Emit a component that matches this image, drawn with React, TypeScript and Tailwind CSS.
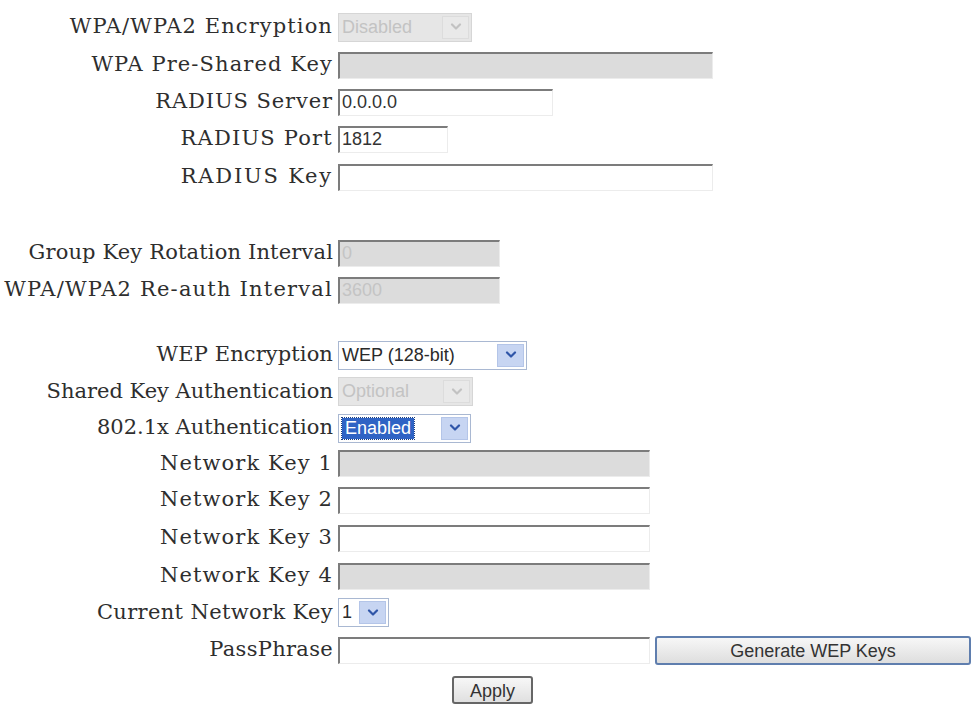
import React from "react"

function Chevron({ color }: { color: string }) {
  return (
    <svg width="12" height="8" viewBox="0 0 12 8" fill="none">
      <path d="M2 1.5 L6 5.5 L10 1.5" stroke={color} strokeWidth="2.2" strokeLinecap="round" strokeLinejoin="round" />
    </svg>
  )
}

function TextBox({ w, value = "", disabled = false }: { w: string; value?: string; disabled?: boolean }) {
  return (
    <input
      readOnly
      value={value}
      className={`${w} h-[27px] border-t-2 border-l-2 border-b border-r border-t-[#7c7c7c] border-l-[#7c7c7c] border-b-[#ececec] border-r-[#ececec] px-[2px] text-[18px] font-['Liberation_Sans',Arial,sans-serif] outline-none ${
        disabled ? "bg-[#dcdcdc] text-[#c4c4c4]" : "bg-white text-[#333]"
      }`}
    />
  )
}

function Select({
  w,
  value,
  variant = "normal",
}: {
  w: string
  value: string
  variant?: "normal" | "disabled" | "focused"
}) {
  const disabled = variant === "disabled"
  return (
    <div
      className={`${w} h-[29px] flex items-stretch border font-['Liberation_Sans',Arial,sans-serif] text-[18px] ${
        disabled ? "border-[#d6d6d6] bg-[#e6e6e6]" : "border-[#a9b8d2] bg-white"
      }`}
    >
      <div className="flex-1 flex items-center pl-[3px] pr-[2px] min-w-0 whitespace-nowrap">
        {variant === "focused" ? (
          <span className="bg-[#2f63c4] text-white px-[3px] leading-[21px] outline outline-1 outline-dotted outline-[#1c3f80]">{value}</span>
        ) : (
          <span className={disabled ? "text-[#c3c3c3]" : "text-[#2a2a2a]"}>{value}</span>
        )}
      </div>
      <div
        className={`w-[27px] m-[2px] ml-[4px] flex items-center justify-center ${
          disabled ? "bg-[#e9e9e9] border border-[#dcdcdc]" : "bg-[#c7d5f2] border border-[#b4c5e8]"
        }`}
      >
        <Chevron color={disabled ? "#c2c2c2" : "#2f55a8"} />
      </div>
    </div>
  )
}

function Row({
  label,
  h,
  track = "tracking-normal",
  children,
}: {
  label?: string
  h: string
  track?: string
  children?: React.ReactNode
}) {
  return (
    <div className={`flex items-center ${h}`}>
      <div className="w-[333px] text-right text-[21px] text-[#2e2e2e] whitespace-nowrap font-['DejaVu_Serif',serif]">
        <span className={track}>{label}</span>
      </div>
      <div className="flex items-center gap-[5px] pl-[5px]">{children}</div>
    </div>
  )
}

export default function App() {
  return (
    <div className="w-[979px] h-[715px] bg-white pt-[8px] overflow-hidden">
      <Row label="WPA/WPA2 Encryption" h="h-[38px]" track="tracking-[1.1px]">
        <Select w="w-[134px]" value="Disabled" variant="disabled" />
      </Row>
      <Row label="WPA Pre-Shared Key" h="h-[38px]" track="tracking-[1.1px]">
        <TextBox w="w-[375px]" disabled />
      </Row>
      <Row label="RADIUS Server" h="h-[36px]" track="tracking-[0.9px]">
        <TextBox w="w-[215px]" value="0.0.0.0" />
      </Row>
      <Row label="RADIUS Port" h="h-[38px]" track="tracking-[1.2px]">
        <TextBox w="w-[110px]" value="1812" />
      </Row>
      <Row label="RADIUS Key" h="h-[38px]" track="tracking-[1.8px]">
        <TextBox w="w-[375px]" />
      </Row>
      <div className="h-[38px]" />
      <Row label="Group Key Rotation Interval" h="h-[38px]" track="tracking-[0.15px]">
        <TextBox w="w-[162px]" value="0" disabled />
      </Row>
      <Row label="WPA/WPA2 Re-auth Interval" h="h-[36px]" track="tracking-[1.2px]">
        <TextBox w="w-[162px]" value="3600" disabled />
      </Row>
      <div className="h-[29px]" />
      <Row label="WEP Encryption" h="h-[36px]" track="tracking-[0.1px]">
        <Select w="w-[189px]" value="WEP (128-bit)" />
      </Row>
      <Row label="Shared Key Authentication" h="h-[37px]">
        <Select w="w-[135px]" value="Optional" variant="disabled" />
      </Row>
      <Row label="802.1x Authentication" h="h-[36px]">
        <Select w="w-[133px]" value="Enabled" variant="focused" />
      </Row>
      <Row label="Network Key 1" h="h-[35px]" track="tracking-[1.1px]">
        <TextBox w="w-[312px]" disabled />
      </Row>
      <Row label="Network Key 2" h="h-[38px]" track="tracking-[1.1px]">
        <TextBox w="w-[312px]" />
      </Row>
      <Row label="Network Key 3" h="h-[38px]" track="tracking-[1.1px]">
        <TextBox w="w-[312px]" />
      </Row>
      <Row label="Network Key 4" h="h-[38px]" track="tracking-[1.1px]">
        <TextBox w="w-[312px]" disabled />
      </Row>
      <Row label="Current Network Key" h="h-[35px]" track="tracking-[0.35px]">
        <Select w="w-[51px]" value="1" />
      </Row>
      <Row label="PassPhrase" h="h-[40px]" track="tracking-[0.3px]">
        <TextBox w="w-[312px]" />
        <button className="w-[316px] h-[29px] rounded-[3px] border-2 border-[#5f7eae] bg-gradient-to-b from-[#f7f7f7] to-[#dedede] text-[18px] text-[#333] font-['Liberation_Sans',Arial,sans-serif]">
          Generate WEP Keys
        </button>
      </Row>
      <div className="flex justify-center h-[40px] items-center pl-[6px]">
        <button className="w-[81px] h-[28px] rounded-[3px] border-2 border-[#666] bg-gradient-to-b from-[#f7f7f7] to-[#e0e0e0] text-[18px] text-[#333] font-['Liberation_Sans',Arial,sans-serif]">
          Apply
        </button>
      </div>
    </div>
  )
}
